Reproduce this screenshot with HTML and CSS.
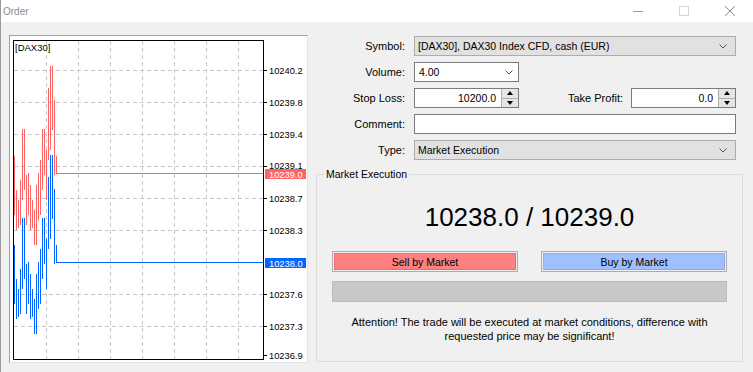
FILE: index.html
```html
<!DOCTYPE html>
<html lang="en">
  <head>
    <meta charset="UTF-8" />
    <meta name="viewport" content="width=device-width, initial-scale=1.0" />
    <title>Order</title>
    <link rel="stylesheet" href="styles.css">
  </head>
  <body>
    <div class="window">
      <div class="titlebar">
        <span class="title">Order</span>
        <div class="controls">
          <span class="ctl">
            <svg width="12" height="12" viewBox="0 0 12 12"><path d="M1 6.5H11" stroke="#9a9a9a" fill="none"/></svg>
          </span>
          <span class="ctl">
            <svg width="12" height="12" viewBox="0 0 12 12"><rect x="1.5" y="1.5" width="9" height="9" stroke="#d4d4d4" fill="none"/></svg>
          </span>
          <span class="ctl">
            <svg width="12" height="12" viewBox="0 0 12 12"><path d="M1 1L11 11M11 1L1 11" stroke="#8a8a8a" fill="none"/></svg>
          </span>
        </div>
      </div>

      <div class="content">
        <!-- tick chart -->
        <div class="chart">
          <svg width="297" height="326" viewBox="10 36 297 326">
            <rect x="10" y="36" width="297" height="326" fill="#fff"/>
            <g stroke="#c8c8c8" stroke-dasharray="4 3" fill="none">
              <path d="M46.5 41V359M78.5 41V359M110.5 41V359M142.5 41V359M174.5 41V359M206.5 41V359M238.5 41V359"/>
              <path d="M14 70.5H263M14 102.5H263M14 134.5H263M14 166.5H263M14 198.5H263M14 230.5H263M14 294.5H263M14 326.5H263"/>
            </g>
            <g stroke="#000" fill="none">
              <rect x="13.5" y="40.5" width="250" height="319"/>
              <path d="M263 70.5H267M263 102.5H267M263 134.5H267M263 166.5H267M263 198.5H267M263 230.5H267M263 294.5H267M263 326.5H267M263 355.5H267"/>
            </g>
            <g class="axis">
              <text x="269" y="74">10240.2</text>
              <text x="269" y="106">10239.8</text>
              <text x="269" y="138">10239.4</text>
              <text x="269" y="169">10239.1</text>
              <text x="269" y="202">10238.7</text>
              <text x="269" y="234">10238.3</text>
              <text x="269" y="298">10237.6</text>
              <text x="269" y="330">10237.3</text>
              <text x="269" y="359">10236.9</text>
            </g>
            <text class="sym" x="15" y="51">[DAX30]</text>

            <g class="series" fill="none" stroke-width="1">
              <path stroke="#ff6464" d="M14.5 156V215M16.5 190V230M18.5 200V228M20.5 180V225M22.5 129V200M24.5 129V190M26.5 175V225M28.5 173V215M30.5 185V230M32.5 200V228M34.5 210V245M36.5 185V245M38.5 173V220M40.5 160V215M42.5 129V190M44.5 129V175M46.5 150V200M48.5 88V160M50.5 66V150M52.5 66V130M54.5 100V175M56.5 156V173.5H263"/>
              <path stroke="#0066ff" d="M14.5 245V304M16.5 279V319M18.5 289V317M20.5 269V314M22.5 218V289M24.5 218V279M26.5 264V314M28.5 262V304M30.5 274V319M32.5 289V317M34.5 299V334M36.5 274V334M38.5 262V309M40.5 249V304M42.5 218V279M44.5 218V264M46.5 239V289M48.5 177V249M50.5 155V239M52.5 155V219M54.5 189V264M56.5 245V262.5H263"/>
            </g>

            <rect x="265" y="169" width="41" height="10" fill="#ff6464"/>
            <text class="tag" x="269" y="177.5">10239.0</text>
            <rect x="265" y="258" width="41" height="10" fill="#0066ff"/>
            <text class="tag" x="269" y="266.5">10238.0</text>
          </svg>
        </div>

        <div class="panel">
          <div class="form">
            <label>Symbol:</label>
            <div class="select">
              <span>[DAX30], DAX30 Index CFD, cash (EUR)</span>
              <svg class="chev" width="8" height="5" viewBox="0 0 8 5"><path d="M0.5 0.5L4 4L7.5 0.5" stroke="#555" fill="none"/></svg>
            </div>

            <label>Volume:</label>
            <div class="row">
              <div class="combo">
                <span>4.00</span>
                <svg class="chev" width="8" height="5" viewBox="0 0 8 5"><path d="M0.5 0.5L4 4L7.5 0.5" stroke="#555" fill="none"/></svg>
              </div>
            </div>

            <label>Stop Loss:</label>
            <div class="row">
              <div class="num">
                <span class="val">10200.0</span>
                <div class="spin"><i class="up"></i><i class="down"></i></div>
              </div>
              <label class="grow">Take Profit:</label>
              <div class="num">
                <span class="val">0.0</span>
                <div class="spin"><i class="up"></i><i class="down"></i></div>
              </div>
            </div>

            <label>Comment:</label>
            <div class="text"></div>

            <label>Type:</label>
            <div class="select">
              <span>Market Execution</span>
              <svg class="chev" width="8" height="5" viewBox="0 0 8 5"><path d="M0.5 0.5L4 4L7.5 0.5" stroke="#555" fill="none"/></svg>
            </div>
          </div>

          <fieldset class="exec">
            <legend>Market Execution</legend>
            <div class="price">10238.0 / 10239.0</div>
            <div class="buttons">
              <div class="btn sell"><span>Sell by Market</span></div>
              <div class="btn buy"><span>Buy by Market</span></div>
            </div>
            <div class="bar"></div>
            <p class="note">Attention! The trade will be executed at market conditions, difference with<br>requested price may be significant!</p>
          </fieldset>
        </div>
      </div>
    </div>
  </body>
</html>
```

FILE: styles.css
```css
* {
  margin: 0;
  padding: 0;
  box-sizing: border-box;
}
body {
  background: #f0f0f0;
  font-family: "Liberation Sans", Arial, sans-serif;
  font-size: 10.5px;
  color: #000;
}
.window {
  width: 753px;
  height: 372px;
  border-left: 1px solid #9a9a9a;
}
.titlebar {
  height: 22px;
  background: #fff;
  display: flex;
  align-items: center;
  padding-left: 2px;
}
.titlebar .title {
  color: #8d8d8d;
  font-size: 10px;
}
.titlebar .controls {
  margin-left: auto;
  display: flex;
}
.titlebar .ctl {
  width: 46px;
  height: 22px;
  display: flex;
  align-items: center;
  justify-content: center;
}
.content {
  display: flex;
  gap: 8px;
  padding: 13px 10px 0 8px;
}

/* chart */
.chart {
  width: 299px;
  height: 328px;
  border-top: 1px solid #a0a0a0;
  border-left: 1px solid #a0a0a0;
  border-right: 1px solid #e3e3e3;
  border-bottom: 1px solid #e3e3e3;
  background: #fff;
}
.chart svg {
  display: block;
}
.chart text {
  font-family: "Liberation Sans", Arial, sans-serif;
  font-size: 9.3px;
  fill: #000;
}
.chart .sym {
  font-size: 9.5px;
}
.chart .tag {
  fill: #fff;
}
.chart .series path {
  shape-rendering: crispEdges;
}

/* order form */
.panel {
  width: 427px;
  display: flex;
  flex-direction: column;
}
.form {
  margin-top: 1px;
  display: grid;
  grid-template-columns: 89px 322px;
  grid-auto-rows: 20px;
  column-gap: 9px;
  row-gap: 6px;
}
.form label {
  text-align: right;
  line-height: 20px;
  font-size: 11px;
}
.row {
  display: flex;
  align-items: stretch;
}
.row .grow {
  flex: 1;
  margin-right: 8px;
}
.select {
  display: flex;
  align-items: center;
  background: #e1e1e1;
  border: 1px solid #adadad;
  padding-left: 3px;
}
.select span,
.combo span {
  flex: 1;
}
.chev {
  margin-right: 8px;
}
.combo {
  width: 105px;
  display: flex;
  align-items: center;
  background: #fff;
  border: 1px solid #7a7a7a;
  padding-left: 4px;
}
.combo .chev {
  margin-right: 5px;
}
.num {
  width: 105px;
  display: flex;
  background: #fff;
  border: 1px solid #7a7a7a;
}
.num .val {
  flex: 1;
  text-align: right;
  padding-right: 5px;
  line-height: 18px;
}
.spin {
  width: 17px;
  display: flex;
  flex-direction: column;
  border-left: 1px solid #adadad;
  background: #e5e5e5;
}
.spin i {
  flex: 1;
  display: flex;
  align-items: center;
  justify-content: center;
}
.spin i + i {
  border-top: 1px solid #adadad;
}
.spin i::before {
  content: "";
  border-left: 3.5px solid transparent;
  border-right: 3.5px solid transparent;
}
.spin .up::before {
  border-bottom: 4px solid #000;
}
.spin .down::before {
  border-top: 4px solid #000;
}
.text {
  background: #fff;
  border: 1px solid #7a7a7a;
}

/* market execution box */
.exec {
  margin-top: 8px;
  height: 194px;
  border: 1px solid #dcdcdc;
  padding: 0 15px;
}
.exec legend {
  margin-left: -8px;
  padding: 0 2px;
  line-height: 13px;
}
.exec .price {
  margin-top: 21px;
  font-size: 26px;
  line-height: 30px;
  text-align: center;
}
.buttons {
  margin-top: 19px;
  display: flex;
  justify-content: space-between;
}
.btn {
  width: 186px;
  height: 21px;
  border: 1px solid #adadad;
  padding: 1px;
}
.btn span {
  display: block;
  height: 100%;
  text-align: center;
  line-height: 16px;
  border: 1px solid;
}
.sell span {
  background: #ff8080;
  border-color: #f07070 #e86a6a #e86a6a #f07070;
}
.buy span {
  background: #a0bfff;
  border-color: #8fb0f5 #88a8ee #88a8ee #8fb0f5;
}
.bar {
  margin-top: 9px;
  height: 21px;
  background: #c8c8c8;
  border: 1px solid #bcbcbc;
}
.note {
  margin-top: 13px;
  text-align: center;
  line-height: 14px;
  font-size: 11px;
}
```
